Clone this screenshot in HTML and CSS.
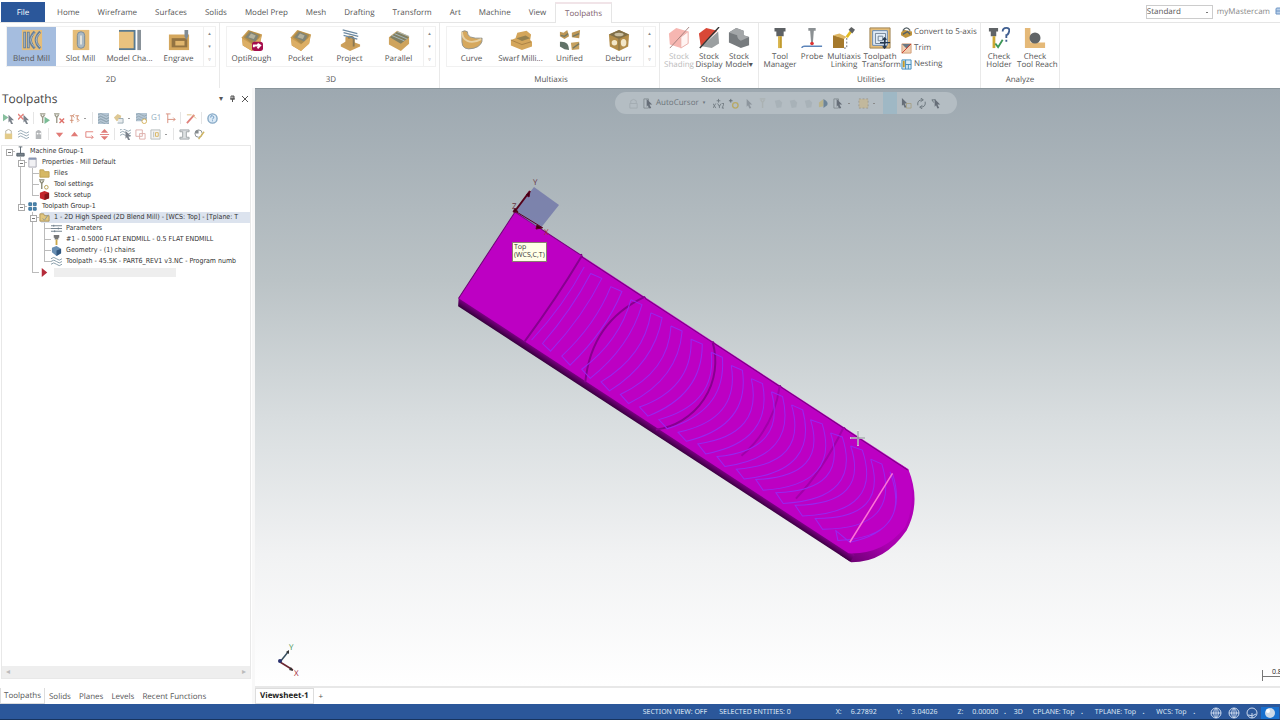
FILE: index.html
```html
<!DOCTYPE html>
<html lang="en">
<head>
<meta charset="utf-8">
<title>Mastercam - Toolpaths</title>
<link rel="stylesheet" href="styles.css">
</head>
<body>
<svg class="defs" aria-hidden="true">
  <symbol id="block" viewBox="0 0 24 24"><path d="M1 9 8 1l15 5-2 9-9 9L2 18z" fill="#c99b50"/><path d="M3 9 9 2l12 4-3 9-6 1z" fill="#a98b4e"/><path d="M5 9 10 3l9 4-3 7z" fill="#7f8478"/><path d="m8 9 3-4 5 2-2 4z" fill="#b3b09c"/><path d="M1 10l1 8 10 6v-7zM12 17l10-9-1 8-9 8z" fill="#dcae64"/></symbol>
  <symbol id="pointer" viewBox="0 0 12 12"><path d="m4 1 6 6H7l2 4-2 .5L5.500 8 4 9.500z" fill="#666e78"/></symbol>
  <symbol id="tool" viewBox="0 0 12 12"><path d="M2 1h6M3 2l2 3 2-3M5 4v7" fill="none" stroke="#8b8a76" stroke-width="1.500"/></symbol>
  <symbol id="waves" viewBox="0 0 12 12"><path d="M0 3q3-3 6 0t6 0M0 6q3-3 6 0t6 0M0 9q3-3 6 0t6 0" fill="none" stroke="#8097a5"/></symbol>
  <symbol id="globe" viewBox="0 0 12 12"><circle cx="6" cy="6" r="5" fill="none" stroke="#cbd8ed"/><path d="M1 6h10M6 1v10M6 1Q1 6 6 11M6 1q5 5 0 10" fill="none" stroke="#cbd8ed"/></symbol>
</svg>
<div class="app">
  <header>
    <nav class="tabs" aria-label="Ribbon tabs">
      <button class="file">File</button>
      <button>Home</button><button>Wireframe</button><button>Surfaces</button><button>Solids</button><button>Model Prep</button><button>Mesh</button><button>Drafting</button><button>Transform</button><button>Art</button><button>Machine</button><button>View</button><button class="current">Toolpaths</button>
      <div class="account">
        <select aria-label="Workspace"><option>Standard</option></select>
        <a href="#">myMastercam</a>
        <svg width="5" height="10" viewBox="0 0 5 10"><path d="M5 1H2Q1 1 1 2v5h4M1 4h4" fill="#b9d0ea" stroke="#6e95c4"/></svg>
      </div>
    </nav>
    <div class="ribbon">
      <section class="group wide">
        <div class="gallery">
          <button class="selected"><svg viewBox="0 0 24 24"><path fill="#e5bd79" d="M1 1h22v22H1z"/><path d="M4 3v18M8 3v18M15 3Q6 12 15 21M21 3Q12 12 21 21" fill="none" stroke="#667f99" stroke-width="3"/><path d="M4 4v16M8 4v16M15 4Q6 12 15 20M21 4Q12 12 21 20" fill="none" stroke="#aebdca"/></svg>Blend Mill</button>
          <button><svg viewBox="0 0 24 24"><path fill="#e5bd79" d="M3 1h18v22H3z"/><rect x="8" y="3" width="8" height="18" rx="4" fill="#aab9c4" stroke="#778995"/><path d="M12 7v10" stroke="#e9e8df" stroke-width="2"/></svg>Slot Mill</button>
          <button><svg viewBox="0 0 24 24"><path fill="#e9c27f" d="M0 1h17v22H0z"/><path d="M0 2h17v20H0" fill="none" stroke="#587a91" stroke-width="2"/><path fill="#889198" d="M20 1h4v22h-4z"/></svg>Model Cha...</button>
          <button><svg viewBox="0 0 24 24"><path fill="#d4a75d" d="M1 6h22v17H1z"/><path fill="#927342" d="M4 10h17v10H4z"/><path fill="#e1b66d" d="M8 13h10v5H8z"/><path d="M18 1h4v7l-2 4-2-4z" fill="#808b93"/></svg>Engrave</button>
          <div class="arrows"><button aria-label="Up">▴</button><button aria-label="Down">▾</button><button aria-label="More">▿</button></div>
        </div><h2>2D</h2>
      </section>
      <section class="group wide">
        <div class="gallery">
          <button><svg viewBox="0 0 24 24"><use href="#block"/><rect x="12" y="14" width="12" height="10" rx="3" fill="#a50d4c"/><path d="M14 20v-2h7m-3-2 3 2-3 3" fill="none" stroke="#fff" stroke-width="2"/></svg>OptiRough</button>
          <button><svg><use href="#block"/></svg>Pocket</button>
          <button><svg viewBox="0 0 24 24"><path d="m2 17 8-5 13 5v2l-11 5-10-5z" fill="#cda05a"/><path d="M7 18V9q5-4 10 1v9q-5 3-10-1" fill="#c89d59"/><path d="M10 10q5-3 6 1v8" fill="none" stroke="#8a7853" stroke-width="2"/><path d="m4 1 16 4M5 4l16 4M5 7l15 4" stroke="#6d8aa2" stroke-width="1.500"/></svg>Project</button>
          <button><svg viewBox="0 0 24 24"><path d="m1 9 9-7 13 6v8l-9 8L1 17z" fill="#cfa45d"/><path d="m2 9 8-6 13 6-9 7z" fill="#807f62"/><path d="m4 7 14 6M7 5l14 6M10 3l13 5" stroke="#a9bac1"/></svg>Parallel</button>
          <div class="arrows"><button aria-label="Up">▴</button><button aria-label="Down">▾</button><button aria-label="More">▿</button></div>
        </div><h2>3D</h2>
      </section>
      <section class="group wide">
        <div class="gallery">
          <button><svg viewBox="0 0 24 24"><path d="M1 3q3-2 6 0-1 8 16 7 1 8-9 11Q1 24 1 14z" fill="#d6a85d" stroke="#8f938d"/><path d="M1 3q0 7 6 10 6 3 15-2" fill="none" stroke="#e7d1a5" stroke-width="2"/></svg>Curve</button>
          <button><svg viewBox="0 0 24 24"><path d="m1 12 5-2 2-6 10-2 5 4-1 6 2 2v5l-11 4L1 18z" fill="#d4a65b"/><path d="m1 12 12 5 10-3" fill="none" stroke="#a88145"/><path d="m7 10 10-3 5 3-9 3z" fill="#94804f"/></svg>Swarf Milli...</button>
          <button><svg viewBox="0 0 24 24"><path d="m1 3 4 1 4-3 2 7-5 3-5-3zM14 4l9-3-1 9-8-1z" fill="#bd9655"/><path d="M1 14q10-1 10 9l-5-1-5-3z" fill="#617268"/><path d="m13 15 9-1v8l-8 1z" fill="#c6a15f"/><path d="m2 7 4 1 4-3m5 3 7-3m-7 16 7-5" stroke="#747862" stroke-width="1.500" fill="none"/></svg>Unified</button>
          <button><svg viewBox="0 0 24 24"><path d="m1 6 11-5 11 5-1 13-10 5-10-5z" fill="#b38d49"/><path d="m1 6 11-5 11 5-11 5z" fill="#806f47"/><circle cx="7" cy="15" r="3" fill="#f3e7c8"/><ellipse cx="17" cy="15" rx="3" ry="4" fill="#f3e7c8"/><ellipse cx="12" cy="6" rx="5" ry="2" fill="#c9bea0"/><path d="M12 11v12" stroke="#786b48"/></svg>Deburr</button>
          <div class="arrows"><button aria-label="Up">▴</button><button aria-label="Down">▾</button><button aria-label="More">▿</button></div>
        </div><h2>Multiaxis</h2>
      </section>
      <section class="group stock">
        <div class="commands">
          <button disabled><svg viewBox="0 0 24 24"><path d="m1 7 8-6 13 4v13l-8 5-12-4z" fill="#f6b6b1"/><path d="M22 5v13l-8 5V11z" fill="#fff4f2" stroke="#eab0ab"/><path d="M23 0 2 23" stroke="#a17f7c"/></svg>Stock<br>Shading</button>
          <button><svg viewBox="0 0 24 24"><path d="m1 7 8-6 12 3L3 21z" fill="#d94837"/><path d="m22 5 1 13-8 5-11-2z" fill="#9b9fa1"/><path d="M23 0 2 23" stroke="#333" stroke-width="1.500"/></svg>Stock<br>Display</button>
          <button><svg viewBox="0 0 24 24"><path d="m1 6 8-5 8 3v5l6 2v9l-9 3-13-6z" fill="#777b7e"/><path d="m1 6 8-5 8 3-7 5zM10 9l7-5v5l6 2-9 4q-4-2-4-6z" fill="#a3a6a8"/></svg>Stock<br>Model▾</button>
        </div><h2>Stock</h2>
      </section>
      <section class="group utilities">
        <div class="commands">
          <button><svg viewBox="0 0 24 24"><path d="M6 1h12v4h-2v5H8V5H6z" fill="#5d6164"/><path d="M10 10h4v13h-4z" fill="#c19b2e"/><path d="M11 10v13" stroke="#f0cd61"/></svg>Tool<br>Manager</button>
          <button><svg viewBox="0 0 24 24"><path d="M8 1h8v3h-2l-1 13h-2L10 4H8z" fill="#8b9093"/><circle cx="12" cy="18" r="2" fill="#d33"/><path d="M1 23q0-2 3-2h19" stroke="#5d85ba" fill="none" stroke-width="1.500"/></svg>Probe</button>
          <button><svg viewBox="0 0 24 24"><path d="m0 9 12 3v11H0z" fill="#a5792c"/><path d="m0 9 7-2 8 4-3 2z" fill="#dfb763"/><path d="M15 12v11h-3" fill="none" stroke="#666" stroke-dasharray="2"/><path d="m15 11 6-8" stroke="#e2bb22" stroke-width="3"/><path d="m17 3 3-3 4 3-3 4z" fill="#606263"/></svg>Multiaxis<br>Linking</button>
          <button><svg viewBox="0 0 24 24"><path d="M1 1h22v22H1z" fill="#e4bd78" stroke="#9c8051"/><path d="M4 4h16v16H4z" fill="#e4eef8" stroke="#5b83b5"/><path d="M7 7h11v11H7zM10 10h5v5h-5z" fill="none" stroke="#6b7e91"/><path d="M17 12v11M12 17h11m-8-3 2-2 2 2m-4 7 2 2 2-2" fill="none" stroke="#26394f" stroke-width="1.500"/></svg>Toolpath<br>Transform</button>
          <div class="small-commands">
            <button><svg viewBox="0 0 12 12"><path d="m0 6 3-3 9 2v4l-7 3-5-3z" fill="#bf943c"/><path d="M2 4q4-6 8 0m-8 4 5-3 3 3" fill="none" stroke="#566167" stroke-width="1.500"/></svg>Convert to 5-axis</button>
            <button><svg viewBox="0 0 12 12"><path d="M1 1h10v10H1z" fill="#f0ceb0" stroke="#d09d77"/><path d="M1 1h10L6 6z" fill="#6b7983"/><path d="M11 1 1 11" stroke="#c9362c"/></svg>Trim</button>
            <button><svg viewBox="0 0 12 12"><path d="M1 1h10v10H1z" fill="#d9ecf7" stroke="#3e89b9"/><path d="M5 1v10M5 6h6M8 6v5" stroke="#3e89b9"/><path d="M3 2v7" stroke="#c69a26" stroke-width="2"/></svg>Nesting</button>
          </div>
        </div><h2>Utilities</h2>
      </section>
      <section class="group analyze">
        <div class="commands">
          <button><svg viewBox="0 0 24 24"><path d="M1 1h10v4H9v5H3V5H1z" fill="#606467"/><path d="M5 10h3v13H5z" fill="#cda833"/><path d="m8 18 3 4 5-8" fill="none" stroke="#3c9657" stroke-width="2"/><path d="M16 5q0-4 4-4t3 4-3 4v3m0 2v2" fill="none" stroke="#405f90" stroke-width="2"/></svg>Check<br>Holder</button>
          <button><svg viewBox="0 0 24 24"><path d="M1 1h6v16h16v6H1z" fill="#e5b978"/><circle cx="12" cy="12" r="6" fill="#606467"/></svg>Check<br>Tool Reach</button>
        </div><h2>Analyze</h2>
      </section>
    </div>
  </header>
  <main>
    <aside>
      <div class="panel-title"><h1>Toolpaths</h1><button aria-label="Options">▾</button><button aria-label="Pin"><svg width="7" height="8" viewBox="0 0 7 8"><path d="M2 1h3v3H2zM4 1v3M1 4h5M3.500 4v3" fill="none" stroke="#555"/></svg></button><button aria-label="Close"><svg width="6" height="6" viewBox="0 0 6 6"><path d="m0 0 6 6M6 0 0 6" stroke="#555"/></svg></button></div>
      <div class="toolbar" role="toolbar" aria-label="Operations">
        <button aria-label="Select all"><svg viewBox="0 0 12 12"><path d="m0 1 6 4-6 4z" fill="#74b58e"/><use href="#pointer" x="2" y="1"/></svg></button>
        <button aria-label="Deselect"><svg viewBox="0 0 12 12"><path d="m0 1 6 6m0-6L0 7" stroke="#e06c64" stroke-width="1.500"/><use href="#pointer" x="2" y="1"/></svg></button><i></i>
        <button aria-label="Regenerate"><svg viewBox="0 0 12 12"><use href="#tool" x="-1"/><path d="m6 4 6 4-6 4z" fill="#64b184"/></svg></button>
        <button aria-label="Regenerate dirty"><svg viewBox="0 0 12 12"><use href="#tool" x="-2"/><path d="m6 6 5 5m0-5-5 5" stroke="#d95951" stroke-width="1.500"/></svg></button>
        <button class="drop" aria-label="Tools"><svg viewBox="0 0 12 12"><path d="M1 3h4m2 0h4M1 8h4M3 3v8M9 3v5M6 1 4 3l2 2m3 1 2 2-2 2" fill="none" stroke="#cb7c5a"/></svg></button><i></i>
        <button aria-label="Backplot"><svg viewBox="0 0 12 12"><rect width="12" height="12" fill="#a8bccd"/><use href="#waves" y="-1"/><use href="#waves" y="2"/></svg></button>
        <button class="drop" aria-label="Verify"><svg viewBox="0 0 12 12"><path d="m1 5 4-4 4 2-1 4-4 2z" fill="#d9bf82"/><path d="M6 6h5v5H5" fill="#e3e8eb" stroke="#879aa5"/></svg></button>
        <button aria-label="Simulate"><svg viewBox="0 0 12 12"><rect width="12" height="9" fill="#a8bccd"/><use href="#waves" y="-1"/><circle cx="9" cy="9" r="2.500" fill="#fff" stroke="#cfa43b"/></svg></button>
        <button class="g-code">G1</button>
        <button aria-label="Feed"><svg viewBox="0 0 12 12"><path d="M1 1h5M3 1v10M3 7h8m-2-2 2 2-2 2" fill="none" stroke="#d17c66"/></svg></button><i></i>
        <button aria-label="Wizard"><svg viewBox="0 0 12 12"><path d="m1 11 8-9" stroke="#db6c64" stroke-width="2"/><path d="m7 2 4 4M1 2h5" stroke="#d5b16a"/></svg></button><i></i>
        <button aria-label="Help"><svg viewBox="0 0 12 12"><circle cx="6" cy="6" r="5" fill="#d4e6f5" stroke="#719abc" stroke-width="1.500"/><path d="M4 5q0-3 2-2 3 1 0 4m0 1v1" fill="none" stroke="#4b82b5"/></svg></button>
      </div>
      <div class="toolbar" role="toolbar" aria-label="Display">
        <button aria-label="Lock"><svg viewBox="0 0 12 12"><path d="M3 6V2q3-3 6 0v4" fill="none" stroke="#a5a290"/><path d="M2 5h8v6H2z" fill="#dfc276"/></svg></button>
        <button aria-label="Toggle path"><svg><use href="#waves"/></svg></button>
        <button aria-label="Ghost"><svg viewBox="0 0 12 12"><path d="M3 11V3q3-4 6 0v8z" fill="#a8abad"/><circle cx="5" cy="5" r="1" fill="#fff"/><circle cx="8" cy="5" r="1" fill="#fff"/></svg></button><i></i>
        <button aria-label="Move down"><svg viewBox="0 0 12 12"><path d="M2 4h8L6 9z" fill="#dc6560"/></svg></button>
        <button aria-label="Move up"><svg viewBox="0 0 12 12"><path d="M2 8h8L6 3z" fill="#dc6560"/></svg></button>
        <button aria-label="Insert"><svg viewBox="0 0 12 12"><path d="M10 3H2v6h8M8 7l2 2-2 2" fill="none" stroke="#dc6962"/></svg></button>
        <button aria-label="Scroll to insert"><svg viewBox="0 0 12 12"><path d="m6 0 4 4H2zM6 12 2 8h8z" fill="#dc6560"/><path d="M1 6h10" stroke="#dc6560"/></svg></button><i></i>
        <button aria-label="Select path"><svg viewBox="0 0 12 12"><use href="#waves" y="-2"/><use href="#pointer" x="2" y="1"/></svg></button>
        <button aria-label="Overlap"><svg viewBox="0 0 12 12"><path d="M1 1h7v7H1zM5 5h6v6H5z" fill="none" stroke="#d8a09b"/></svg></button>
        <button class="drop" aria-label="View"><svg viewBox="0 0 12 12"><path d="M1 1h10v10H1zM4 3v6" fill="#f1f1f0" stroke="#a9afaf"/><path d="M6 4h3v4H6z" fill="none" stroke="#d1a643"/></svg></button><i></i>
        <button aria-label="Sync"><svg viewBox="0 0 12 12"><path d="M1 1h10v2H8v6h3v2H1V9h3V3H1z" fill="#d9dddf" stroke="#8b9396"/></svg></button>
        <button aria-label="Settings"><svg viewBox="0 0 12 12"><circle cx="5" cy="5" r="4" fill="#fff" stroke="#70777b"/><path d="M5 1v4H1q0-4 4-4" fill="#70777b"/><path d="m5 11 6-8" stroke="#c7a845" stroke-width="1.500"/></svg></button>
      </div>
      <div class="tree-box">
        <ul class="tree">
          <li><div class="row"><span class="branch open"></span><svg viewBox="0 0 12 12"><path d="M4 1h4M6 1v7M2 11V8h8v3z" fill="#77828b" stroke="#56626c"/></svg>Machine Group-1</div>
            <ul>
              <li><div class="row"><span class="branch open"></span><svg viewBox="0 0 12 12"><path d="M2 1h8v10H2z" fill="#f1f1f4" stroke="#a9a9b3"/><path d="M2 2h8" stroke="#8996b3" stroke-width="2"/></svg>Properties - Mill Default</div>
                <ul>
                  <li><div class="row"><span class="branch"></span><svg viewBox="0 0 12 12"><path d="M1 2h4l1 2h5v6H1z" fill="#d6b864" stroke="#bda052"/></svg>Files</div></li>
                  <li><div class="row"><span class="branch"></span><svg viewBox="0 0 12 12"><use href="#tool" x="-2"/><circle cx="8" cy="9" r="2" fill="none" stroke="#b29b4b"/></svg>Tool settings</div></li>
                  <li><div class="row"><span class="branch"></span><svg viewBox="0 0 12 12"><path d="m1 3 5-2 5 2v6l-5 2-5-2z" fill="#c4242d"/><path d="m6 5 5-2v6l-5 2z" fill="#85151c"/></svg>Stock setup</div></li>
                </ul>
              </li>
              <li><div class="row"><span class="branch open"></span><svg viewBox="0 0 12 12"><path d="M2 2h3v3H2zM7 2h3v3H7zM2 7h3v3H2zM7 7h3v3H7z" fill="#4e8ab2" stroke="#376f96"/></svg>Toolpath Group-1</div>
                <ul>
                  <li><div class="row active"><span class="branch open"></span><svg viewBox="0 0 12 12"><path d="M1 2h4l1 2h5v6H1z" fill="#e2c77f" stroke="#aa935c"/><path d="m4 7 2 2 4-6" fill="none" stroke="#87969a"/></svg><span>1 - 2D High Speed (2D Blend Mill) - [WCS: Top] - [Tplane: T</span></div>
                    <ul>
                      <li><div class="row"><span class="branch"></span><svg viewBox="0 0 12 12"><path d="M0 3h12M0 6h12M0 9h12M3 2v2m5 1v2M4 8v2" stroke="#6b7b87"/></svg>Parameters</div></li>
                      <li><div class="row"><span class="branch"></span><svg viewBox="0 0 12 12"><path d="M3 1h6v3H8v2H4V4H3z" fill="#777"/><path d="M5 6h2v6H5z" fill="#caa748"/></svg>#1 - 0.5000 FLAT ENDMILL - 0.5 FLAT ENDMILL</div></li>
                      <li><div class="row"><span class="branch"></span><svg viewBox="0 0 12 12"><path d="m1 3 5-2 5 3v5l-5 3-5-4z" fill="#698fb3"/><path d="m6 6 5-2v5l-5 3z" fill="#31577f"/></svg>Geometry - (1) chains</div></li>
                      <li><div class="row"><span class="branch"></span><svg><use href="#waves"/></svg><span>Toolpath - 45.5K - PART6_REV1 v3.NC - Program numb</span></div></li>
                    </ul>
                  </li>
                  <li><div class="row"><span class="branch"></span><svg viewBox="0 0 12 12"><path d="m3 1 6 5-6 5z" fill="#b52c3a"/></svg><span class="insert"></span></div></li>
                </ul>
              </li>
            </ul>
          </li>
        </ul>
        <div class="hscroll"><span>◂</span><span>▸</span></div>
      </div>
      <nav class="bottom-tabs" aria-label="Panels"><button class="current">Toolpaths</button><button>Solids</button><button>Planes</button><button>Levels</button><button>Recent Functions</button></nav>
    </aside>
    <section class="work">
      <div class="viewport">
        <svg class="scene" viewBox="255 88 1025 600" preserveAspectRatio="xMinYMin meet">
          <defs>
            <linearGradient id="side" x1="0" y1="0" x2="0" y2="1"><stop offset="0" stop-color="#8d0095"/><stop offset="1" stop-color="#35003b"/></linearGradient>
            <linearGradient id="tip" x1="0" y1="0" x2="0" y2="1"><stop offset="0" stop-color="#b800be"/><stop offset=".7" stop-color="#a900af"/><stop offset="1" stop-color="#6d0073"/></linearGradient>
          </defs>
          <g transform="translate(515 211) rotate(33.200)">
            <path d="M0 0H470Q499 20 502 52 501 91 473 109H460V0z" fill="url(#tip)"/>
            <path d="M0 101H472V109L4 110 0 103z" fill="url(#side)"/>
            <path d="M0 0H470Q496 24 499 50 496 85 466 103L0 103z" fill="#bd00c3"/>
            <path d="M0 0H78l1-1 2 2h73l1-1 2 1h79l1-1 2 1h77l1-1 2 1h74l1-1 2 1h74" fill="none" stroke="#7a0082"/>
            <path d="M0 0V103" stroke="#6c0073"/>
            <path d="M80 0Q82 50 79 103M155 0Q124 50 152 104M237 1A69 69 0 0 1 237 105" fill="none" stroke="#870090" stroke-width="2"/>
            <path d="M317 1Q335 40 323 80M393 1Q399 48 392 86" fill="none" stroke="#a100aa" stroke-width="2"/>
            <path d="M88 8Q92 52 84 98M97 10L109 8Q114 50 106 97L95 95Q101 50 97 10M121 10L133 8Q141 50 130 98L118 95Q129 50 121 10M145 10L157 8Q170 50 154 98L142 95Q158 50 145 10M169 10L181 8Q199 50 177 98L165 95Q187 50 169 10M193 10L205 8Q228 50 200 98L188 95Q216 50 193 10M217 10L229 8Q257 50 223 98L211 95Q245 50 217 10M241 10L253 8Q286 50 246 98L234 95Q274 50 241 10M265 10L277 8Q314 50 269 98L257 95Q302 50 265 10M289 10L301 8Q342 50 292 98L280 94Q330 50 289 10M313 10L325 8Q370 50 315 98L303 94Q358 50 313 10M337 10L349 8Q396 50 338 98L326 94Q384 50 337 10M361 12L373 9Q422 50 360 97L348 92Q407 50 361 12M385 12L397 9Q448 50 384 97L372 92Q432 50 385 12M409 12L421 9Q473 50 407 97L395 92Q457 50 409 12M433 12L445 10Q497 54 431 97L419 92Q481 52 433 12M459 12Q505 50 461 93M456 12Q512 54 450 98L443 91 461 93" fill="none" stroke="#9826f0"/>
            <path d="M459 12 461 93" stroke="#ff73d7" stroke-width="1.500"/>
          </g>
          <path d="m515 210 19-24 25 18-19 24z" fill="#7379a9" opacity=".85"/>
          <path d="m515 210 15-20" stroke="#54001a" stroke-width="2"/><path d="m515 210 28 17m-30-16 2-4 3 4zm13-17 4-4-1 6zm11 30 5 3-6 1z" fill="#3c0010" stroke="#5b0020"/>
          <g class="axis"><text x="533" y="184">Y</text><text x="512" y="208">Z</text><text x="544" y="234" class="red">X</text></g>
          <path d="M858 429v16M850 437h15" stroke="#eee" stroke-width="2" opacity=".7"/><path d="M858 430v14M851 437h14" stroke="#858f91"/>
          <path d="m280 661 8-10" stroke="#374f5e" stroke-width="1.500"/><path d="m280 661 13 8" stroke="#6b2631" stroke-width="1.500"/><path d="m286 651 3-2v4zM289 669l4 1-2-4z" fill="#333"/><circle cx="280" cy="660" r="2" fill="#29306e"/>
          <g class="axis"><text x="289" y="649" class="green">Y</text><text x="294" y="675" class="red">X</text></g>
        </svg>
        <div class="tip">Top<br>(WCS,C,T)</div>
        <div class="selection-bar" role="toolbar" aria-label="Selection">
          <button aria-label="Lock"><svg viewBox="0 0 12 12" opacity=".3"><path d="M3 6V3q3-3 6 0v3M2 6h8v5H2z" fill="none" stroke="#7d858b"/></svg></button>
          <button class="auto"><svg viewBox="0 0 12 12"><path d="M1 1h5v10H1z" fill="none" stroke="#848d93"/><use href="#pointer"/></svg>AutoCursor <span>▾</span></button>
          <button aria-label="Coordinates"><svg viewBox="0 0 12 12"><path d="m0 6 3 5m0-5-3 5m5-5 2 3 2-3M7 8v3m3-5h2l-2 5h2M6 1v4M4 3h4" fill="none" stroke="#737d83"/></svg></button>
          <button aria-label="Point"><svg viewBox="0 0 12 12"><path d="M1 3h4M3 1v4" stroke="#606a70"/><circle cx="8" cy="8" r="3" fill="none" stroke="#b8a967" stroke-width="1.500"/></svg></button>
          <button class="dim" aria-label="Pick"><svg><use href="#pointer"/></svg></button>
          <button class="faint" aria-label="Window"><svg><use href="#tool"/></svg></button>
          <button class="faint" aria-label="Face"><svg viewBox="0 0 12 12"><path d="m2 3 5-1 3 3-1 5-5 1z" fill="#7c878f"/></svg></button>
          <button class="faint" aria-label="Body"><svg viewBox="0 0 12 12"><path d="m2 3 5-1 3 3-1 5-5 1z" fill="#7c878f"/></svg></button>
          <button class="faint" aria-label="Edge"><svg viewBox="0 0 12 12"><path d="m2 3 5-1 3 3-1 5-5 1z" fill="#7c878f"/></svg></button>
          <button aria-label="Shade"><svg viewBox="0 0 12 12"><path d="m1 5 5-4v8l-5 1z" fill="#b9b38d"/><path d="M6 1q6 3 4 7l-4 3z" fill="#6d8498"/></svg></button>
          <button class="drop" aria-label="Method"><svg viewBox="0 0 12 12"><path d="M1 1h5v10H1z" fill="none" stroke="#848d93"/><use href="#pointer"/></svg></button>
          <button class="drop" aria-label="Area"><svg viewBox="0 0 12 12"><path d="M1 1h10v10H1z" fill="#c2b89c" stroke="#9b9990" stroke-dasharray="2"/></svg></button>
          <button class="blue" aria-label="Verify"></button>
          <button aria-label="Last"><svg viewBox="0 0 12 12"><use href="#pointer" x="-3" y="-1"/><path d="M6 6h5v5H6z" fill="none" stroke="#a7a287"/></svg></button>
          <button aria-label="Invert"><svg viewBox="0 0 12 12"><path d="M2 8q-1-6 5-6M10 4q1 6-5 6M5 0l3 2-3 2m2 4-3 2 3 2" fill="none" stroke="#68737a"/></svg></button>
          <button aria-label="Undo"><svg viewBox="0 0 12 12"><path d="M1 2h4m-4 0 2 3" stroke="#68737a"/><use href="#pointer"/></svg></button>
        </div>
        <div class="scale">0.8</div>
      </div>
      <nav class="sheets" aria-label="Viewsheets"><button class="current">Viewsheet-1</button><button>+</button></nav>
    </section>
  </main>
  <footer>
    <span class="view">SECTION VIEW: OFF</span><span class="entities">SELECTED ENTITIES: 0</span>
    <span class="coord"><span>X:</span>6.27892</span><span class="coord"><span>Y:</span>3.04026</span><span class="coord"><span>Z:</span>0.00000</span>
    <span class="dot">▴</span><button class="mode">3D</button><button class="plane">CPLANE: Top <span>▴</span></button><button class="plane">TPLANE: Top <span>▴</span></button><button class="plane">WCS: Top <span>▴</span></button>
    <button aria-label="Wireframe"><svg><use href="#globe"/></svg></button><button aria-label="Hidden"><svg><use href="#globe"/></svg></button><button aria-label="Outline"><svg viewBox="0 0 12 12"><circle cx="6" cy="6" r="5" fill="none" stroke="#cbd8ed"/><path d="M2 8q5 2 8-1M6 6v5" fill="none" stroke="#cbd8ed"/></svg></button><button class="shaded" aria-label="Shaded"><svg viewBox="0 0 12 12"><circle cx="6" cy="6" r="5" fill="#ccd9e8"/><circle cx="4" cy="4" r="2" fill="#fff"/></svg></button>
  </footer>
</div>
</body>
</html>
```

FILE: styles.css
```css
* { box-sizing: border-box; }
body { margin: 0; font: 8px/10px "Open Sans", "Noto Sans", sans-serif; text-rendering: geometricPrecision; color: #555; background: #fff; }
button, select { font: inherit; color: inherit; background: none; border: 0; padding: 0; margin: 0; text-rendering: inherit; }
h1, h2, ul { margin: 0; padding: 0; font-weight: normal; list-style: none; }
svg { display: block; flex: none; }
.defs { position: absolute; width: 0; height: 0; }
.app { display: flex; flex-direction: column; min-height: 100vh; }

.tabs { display: flex; height: 23px; padding: 2px 0 0 1px; border-bottom: 1px solid #e5e5e5; }
.tabs > button { padding: 2px 9px 0; white-space: nowrap; }
.tabs .file { width: 44px; margin-right: 3px; background: #2b579a; color: #fff; }
.tabs .current { height: 21px; padding-top: 0; border: 1px solid #e5e5e5; border-top: 2px solid #f1e4e8; border-bottom: 0; background: #fff; color: #80606c; }
.account { display: flex; align-items: center; gap: 4px; margin-left: auto; }
.account select { width: 67px; height: 14px; border: 1px solid #ccc; appearance: none; background: linear-gradient(#777, #777) right 4px center / 2px 1px no-repeat; }
.account a { color: #888; text-decoration: none; }
.account svg { margin-left: 1px; }

.ribbon { display: flex; height: 65px; }
.group { display: flex; flex-direction: column; padding-top: 3px; border-right: 1px solid #e9e9e9; }
.group h2 { margin-top: auto; padding-bottom: 3px; font-size: 8px; line-height: 10px; text-align: center; }
.wide { width: 220px; padding-left: 6px; padding-right: 3px; }
.stock { width: 99px; padding-left: 4px; }
.utilities { width: 222px; padding-left: 3px; }
.analyze { width: 79px; }
.gallery { display: flex; height: 41px; border: 1px solid #f1f1f1; }
.gallery > button { flex: 1 0 49px; height: 39px; display: flex; flex-direction: column; align-items: center; gap: 3px; padding-top: 2px; white-space: nowrap; }
.gallery svg, .commands > button > svg { width: 22px; height: 22px; }
.gallery .selected { background: #a5bddf; }
.arrows { width: 12px; display: flex; flex-direction: column; border-left: 1px solid #f1f1f1; color: #888; }
.arrows button { flex: 1; font-size: 5px; line-height: 8px; }
.commands { display: flex; align-items: flex-start; }
.commands > button { width: 30px; line-height: 8px; text-align: center; white-space: nowrap; }
.commands > button > svg { margin: 1px auto 4px; }
.commands > button:disabled { color: #bbb; }
.utilities .commands > button { width: 36px; }
.utilities .commands > button:nth-child(2) { width: 28px; }
.analyze .commands > button { width: 36px; }
.small-commands { display: flex; flex-direction: column; gap: 4px; padding: 0 0 0 3px; }
.small-commands button { display: flex; align-items: center; gap: 2px; height: 12px; white-space: nowrap; }
.small-commands svg { width: 11px; height: 11px; }

main { flex: 1; display: flex; min-height: 0; }
aside { width: 255px; display: flex; flex-direction: column; border-right: 3px solid #f8f8f8; }
.panel-title { display: flex; align-items: center; gap: 6px; height: 22px; padding: 0 4px 0 2px; }
.panel-title h1 { flex: 1; font-size: 12px; line-height: 16px; color: #444; }
.toolbar { display: flex; align-items: center; gap: 4px; height: 16px; padding-left: 3px; opacity: .85; }
.toolbar svg { width: 11px; height: 11px; }
.toolbar i { width: 1px; height: 12px; margin-right: 1px; background: #e1e1e1; }
.toolbar .drop { margin-right: 2px; }
.g-code { color: #829fb5; }
.drop { display: flex; align-items: center; }
.drop::after { content: ""; width: 2px; height: 1px; margin-left: 4px; background: #8a8a8a; }
.tree-box { flex: 1; display: flex; flex-direction: column; margin: 3px 1px 9px 1px; border: 1px solid #e8e8e8; overflow: hidden; }
.tree { flex: 1; padding-left: 1px; font-family: "DejaVu Sans Condensed", "Noto Sans", sans-serif; font-size: 7px; line-height: 11px; color: #333; }
.tree ul { padding-left: 12px; }
.tree li { position: relative; }
.tree li li::before { content: ""; position: absolute; left: 5px; top: 0; bottom: 0; border-left: 1px solid #bbb; }
.tree li li:last-child::before { bottom: auto; height: 6px; }
.row { display: flex; align-items: center; height: 11px; white-space: nowrap; }
.row svg { width: 11px; height: 11px; margin-right: 4px; }
.branch { width: 12px; height: 11px; flex: none; background: linear-gradient(#bbb, #bbb) right center / 6px 1px no-repeat; position: relative; }
.open::before { content: ""; display: block; width: 5px; height: 5px; margin: 3px; border: 1px solid #aaa; background: #fff linear-gradient(#777, #777) center / 3px 1px no-repeat; }
.active { background: linear-gradient(#dce3ee, #dce3ee) 14px 0 no-repeat; }
.insert { width: 122px; height: 9px; background: #eee; }
.hscroll { display: flex; justify-content: space-between; align-items: center; height: 12px; padding: 0 4px; background: #eee; color: #bbb; }
.bottom-tabs, .sheets { display: flex; height: 16px; }
.bottom-tabs button { padding: 1px 4px 0; white-space: nowrap; }
.bottom-tabs .current { border: 1px solid #ddd; border-top: 0; padding: 1px 3px 0; }

.work { flex: 1; min-width: 0; display: flex; flex-direction: column; }
.viewport { flex: 1; position: relative; overflow: hidden; border-top: 1px solid #8a959b; border-bottom: 2px solid #e8e8e8; background: linear-gradient(#9da8b0, #bbc3c6 32%, #d8dddf 55%, #f1f2f3 78%, #fff); }
.scene { position: absolute; inset: 0; width: 100%; }
.axis { font-size: 8px; fill: #673340; }
.red { fill: #a62d36; }
.green { fill: #459451; }
.tip { position: absolute; left: 257px; top: 153px; padding: 1px; border: 1px solid #8a806e; background: #ffffe7; color: #333; font-size: 7px; line-height: 8px; }
.selection-bar { position: absolute; left: 360px; top: 3px; display: flex; align-items: center; gap: 4px; height: 22px; width: 342px; padding: 0 13px; border-radius: 11px; background: #b4bdc3; color: #6c757b; }
.selection-bar svg { width: 11px; height: 11px; }
.selection-bar .drop { margin-right: 4px; }
.auto { display: flex; align-items: center; gap: 2px; margin-right: 4px; }
.auto span { margin-left: 2px; font-size: 5px; }
.dim { opacity: .5; }
.faint { opacity: .2; }
.blue { width: 14px; height: 22px; background: #9fb8c5; }
.scale { position: absolute; right: 0; bottom: 5px; width: 18px; height: 11px; padding-left: 9px; border-left: 1px solid #777; font-size: 7px; line-height: 5px; color: #222; white-space: nowrap; background: linear-gradient(#777, #777) 0 6px / 100% 1px no-repeat; }
.sheets button { padding: 1px 5px 0; }
.sheets .current { padding: 0 4px; border: 1px solid #ddd; font-weight: bold; color: #222; }

footer { display: flex; align-items: center; justify-content: flex-end; height: 16px; padding: 2px 1px 0 0; background: #2b579a; border-bottom: 1px solid #17345f; color: #dce6f4; font-family: "Noto Sans", "Open Sans", sans-serif; font-size: 7px; white-space: nowrap; }
.view { margin-right: 12px; }
.entities { margin-right: 45px; }
.coord { display: flex; gap: 9px; margin-right: 20px; }
.dot { margin-left: -14px; font-size: 3px; }
.mode { margin: 0 10px 0 8px; }
.plane { margin-right: 12px; }
.plane:last-of-type { margin-right: 10px; }
.plane span { margin-left: 5px; font-size: 3px; }
footer svg { width: 12px; height: 12px; margin: 0 3px; }
.shaded { background: #1870cf; }
```
